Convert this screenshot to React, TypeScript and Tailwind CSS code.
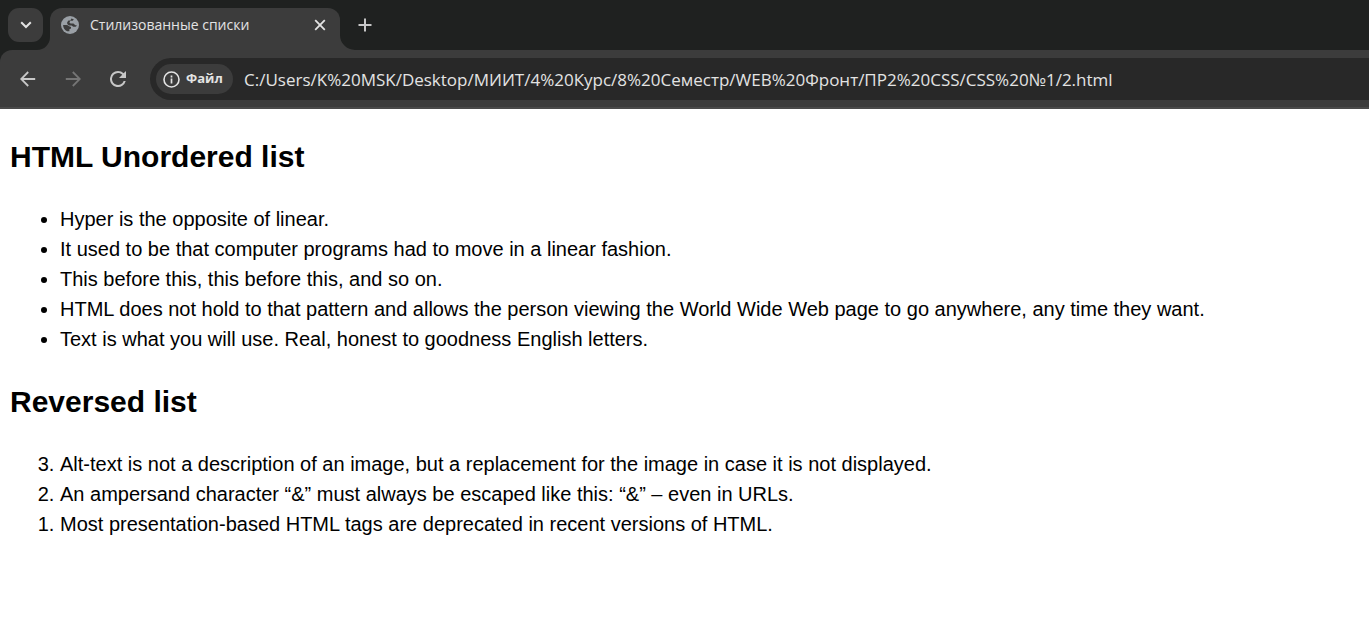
const unordered = [
  'Hyper is the opposite of linear.',
  'It used to be that computer programs had to move in a linear fashion.',
  'This before this, this before this, and so on.',
  'HTML does not hold to that pattern and allows the person viewing the World Wide Web page to go anywhere, any time they want.',
  'Text is what you will use. Real, honest to goodness English letters.',
];

const reversed = [
  'Alt-text is not a description of an image, but a replacement for the image in case it is not displayed.',
  'An ampersand character “&” must always be escaped like this: “&” – even in URLs.',
  'Most presentation-based HTML tags are deprecated in recent versions of HTML.',
];

function Globe() {
  return (
    <svg viewBox="0 0 18 18" className="size-[18px] shrink-0" aria-hidden="true">
      <circle cx="9" cy="9" r="9" fill="#9aa0a6" />
      <path
        d="M10.4 2.4C11.6 2.6 12.3 3 12.9 3.4L11.6 4.8H9.4L8.4 6.6L9.6 7.6H12.2C13.2 7.8 13.4 9 14.4 9.2H15.8C15.4 10.4 14.8 10.8 14 10.8H12.4C11.4 10.6 11.4 9.4 10.4 9.4H8.4C6.8 9.2 5.8 7.8 6.2 6.2L7.4 4.4H9.4Z"
        fill="#3c3c3c"
      />
      <path
        d="M2.1 9H5.4C7.6 9.2 8 10.6 10 11V12.6L8.4 13.2V15.2H6.2C3.6 14.2 2.1 11.8 2.1 9Z"
        fill="#3c3c3c"
      />
    </svg>
  );
}

function TabStrip() {
  return (
    <div className="flex h-[50px] items-start bg-[#1f2120] pl-2">
      <button
        type="button"
        aria-label="Поиск вкладок"
        className="mt-2 flex h-[34px] w-[35px] shrink-0 items-center justify-center rounded-[11px] bg-[#3c3c3c] text-[#e3e3e3]"
      >
        <svg viewBox="0 0 12 8" className="h-2 w-3" fill="none" stroke="currentColor" strokeWidth="2" aria-hidden="true">
          <path d="M1.2 1.2L6 6l4.8-4.8" />
        </svg>
      </button>
      <div className="relative mt-2 ml-[7px] flex h-[42px] w-[290px] shrink-0 items-start rounded-t-xl bg-[#3c3c3c] pl-[11px]">
        <svg viewBox="0 0 13 13" className="absolute bottom-0 -left-[13px] size-[13px]" fill="#3c3c3c" aria-hidden="true">
          <path d="M13 0v13H0A13 13 0 0 0 13 0z" />
        </svg>
        <svg viewBox="0 0 15 15" className="absolute -right-[15px] bottom-0 size-[15px]" fill="#3c3c3c" aria-hidden="true">
          <path d="M0 0v15h15A15 15 0 0 1 0 0z" />
        </svg>
        <div className="flex h-[34px] flex-1 items-center">
          <Globe />
          <span className="ml-[11px] flex-1 font-['Open_Sans','Noto_Sans',sans-serif] text-sm text-[#e3e3e3]">
            Стилизованные списки
          </span>
          <button type="button" aria-label="Закрыть" className="mr-[14px] flex size-3 items-center justify-center text-[#e3e3e3]">
            <svg viewBox="0 0 12 12" className="size-3" stroke="currentColor" strokeWidth="1.8" aria-hidden="true">
              <path d="M1.2 1.2l9.6 9.6M10.8 1.2l-9.6 9.6" />
            </svg>
          </button>
        </div>
      </div>
      <button type="button" aria-label="Новая вкладка" className="mt-2 ml-[18px] flex h-[34px] w-[14px] items-center justify-center text-[#c7c7c7]">
        <svg viewBox="0 0 14 14" className="size-[14px] shrink-0" stroke="currentColor" strokeWidth="2" aria-hidden="true">
          <path d="M7 .5v13M.5 7h13" />
        </svg>
      </button>
    </div>
  );
}

function Toolbar() {
  return (
    <div className="bg-[#1f2120]">
      <div className="flex h-[59px] items-start rounded-tl-xl border-b-2 border-[#4a4a4a] bg-[#3c3c3c] pt-2 pl-5">
        <div className="flex h-[42px] items-center gap-[29px] text-[#c7c7c7]">
          <button type="button" aria-label="Назад">
            <svg viewBox="0 0 16 16" className="size-4" fill="none" stroke="currentColor" strokeWidth="1.8" aria-hidden="true">
              <path d="M15.2 8H1.6M8.2 1L1.2 8l7 7" />
            </svg>
          </button>
          <button type="button" aria-label="Вперёд" className="text-[#757575]">
            <svg viewBox="0 0 16 16" className="size-4" fill="none" stroke="currentColor" strokeWidth="1.8" aria-hidden="true">
              <path d="M.8 8h13.6M7.8 1l7 7-7 7" />
            </svg>
          </button>
          <button type="button" aria-label="Обновить">
            <svg viewBox="4 4 16 16" className="size-4" fill="currentColor" aria-hidden="true">
              <path d="M17.65 6.35A7.958 7.958 0 0 0 12 4a8 8 0 1 0 7.73 10h-2.08A6 6 0 1 1 12 6c1.66 0 3.14.69 4.22 1.78L13 11h7V4z" />
            </svg>
          </button>
        </div>
        <div className="ml-6 flex h-[42px] flex-1 items-center rounded-l-full bg-[#282828] pl-[6px]">
          <button
            type="button"
            className="flex h-[30px] w-[77px] shrink-0 items-center gap-[6px] rounded-full bg-[#3c3c3c] pl-[7px] font-['Open_Sans','Noto_Sans',sans-serif] text-[13px] font-bold text-[#e3e3e3]"
          >
            <svg viewBox="0 0 17 17" className="size-[17px] shrink-0" fill="none" stroke="currentColor" aria-hidden="true">
              <circle cx="8.5" cy="8.5" r="7.5" strokeWidth="1.6" />
              <path d="M8.5 7.6v4.8M8.5 4.6v1.8" strokeWidth="1.7" />
            </svg>
            Файл
          </button>
          <input
            type="text"
            aria-label="Адресная строка"
            readOnly
            value="C:/Users/K%20MSK/Desktop/МИИТ/4%20Курс/8%20Семестр/WEB%20Фронт/ПР2%20CSS/CSS%20№1/2.html"
            className="ml-[11px] h-[30px] min-w-0 flex-1 bg-transparent font-['Open_Sans','Noto_Sans',sans-serif] text-[17px] text-[#e3e3e3] outline-none"
          />
        </div>
      </div>
    </div>
  );
}

export default function App() {
  return (
    <div className="min-h-screen bg-white">
      <header>
        <TabStrip />
        <Toolbar />
      </header>
      <main className="px-[10px] pt-[30px] pb-5 font-['Liberation_Sans',Arial,sans-serif] text-xl leading-[30px] text-black">
        <h2 className="text-[30px] leading-[35px] font-bold">HTML Unordered list</h2>
        <ul className="mt-[30px] list-disc pl-[50px]">
          {unordered.map((text) => (
            <li key={text}>{text}</li>
          ))}
        </ul>
        <h2 className="mt-[30px] text-[30px] leading-[35px] font-bold">Reversed list</h2>
        <ol reversed className="mt-[30px] list-decimal pl-[50px]">
          {reversed.map((text) => (
            <li key={text}>{text}</li>
          ))}
        </ol>
      </main>
    </div>
  );
}
